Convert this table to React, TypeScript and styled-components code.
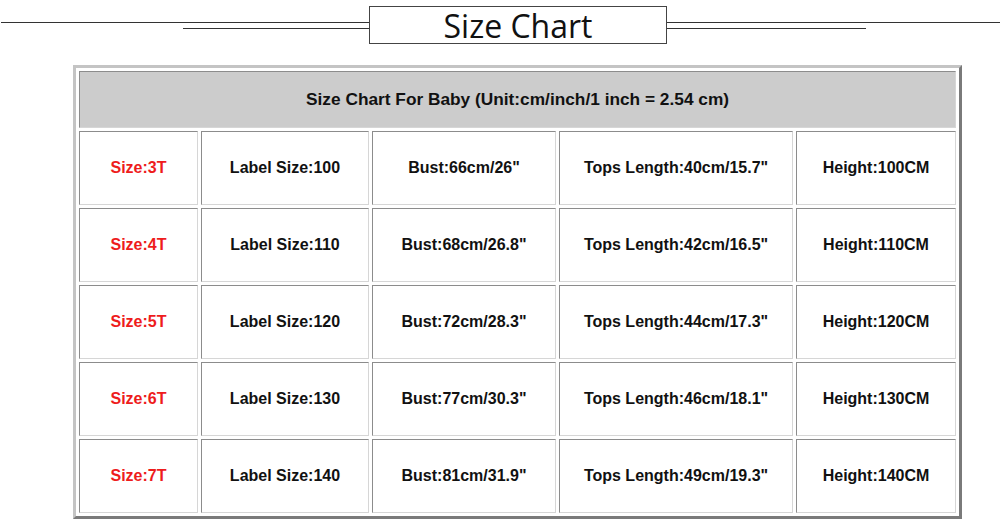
import React from 'react';
import styled, { createGlobalStyle } from 'styled-components';

const GlobalStyle = createGlobalStyle`
  html, body {
    margin: 0;
    padding: 0;
    background: #ffffff;
  }
  body {
    width: 1000px;
    height: 530px;
    overflow: hidden;
    font-family: "Liberation Sans", Arial, sans-serif;
  }
`;

/* page */
const Page = styled.div`
  width: 1000px;
  height: 530px;
  display: flex;
  flex-direction: column;
`;

/* title bar */
const TitleBar = styled.div`
  display: flex;
  align-items: flex-start;
  padding-top: 6px;
  height: 38px;
`;

const Rule = styled.div<{ $side: 'left' | 'right' }>`
  flex: ${({ $side }) => ($side === 'left' ? '0 0 368px' : '1')};
  display: flex;
  flex-direction: column;
  align-items: ${({ $side }) => ($side === 'left' ? 'flex-end' : 'flex-start')};
  padding-top: 16px;
  gap: 5px;
  padding-left: ${({ $side }) => ($side === 'left' ? '1px' : '0')};
`;

const Line = styled.div<{ $short?: number }>`
  height: 1px;
  background: #333;
  width: ${({ $short }) => ($short ? `${$short}px` : '100%')};
`;

const TitleBox = styled.div`
  box-sizing: border-box;
  width: 298px;
  height: 38px;
  border: 1px solid #444;
  display: flex;
  align-items: center;
  justify-content: center;
`;

const TitleText = styled.h1`
  margin: 0;
  font-family: "Open Sans", "Noto Sans", sans-serif;
  font-size: 32px;
  font-weight: 400;
  line-height: 1;
  color: #111;
  padding-top: 1px;
`;

/* chart table */
const Table = styled.table`
  margin: 21px 0 0 73px;
  width: 889px;
  table-layout: fixed;
  border-collapse: separate;
  border-spacing: 3px;
  border: 3px solid;
  border-color: #c4c4c4 #7a7a7a #7a7a7a #c4c4c4;
  background: #ffffff;
`;

const Cell = styled.td<{ $head?: boolean; $red?: boolean }>`
  box-sizing: border-box;
  height: ${({ $head }) => ($head ? '57px' : '74px')};
  padding: 0;
  border: 1px solid;
  border-color: #8c8c8c #d6d6d6 #d6d6d6 #8c8c8c;
  background: ${({ $head }) => ($head ? '#cccccc' : '#ffffff')};
  text-align: center;
  vertical-align: middle;
  font-size: ${({ $head }) => ($head ? '17.3px' : '16px')};
  font-weight: 700;
  color: ${({ $red }) => ($red ? '#ee1c1c' : '#111111')};
  white-space: nowrap;
`;

const colWidths = [119, 168, 184, 234, 160];

const rows = [
  ['3T', '100', '66cm/26"', '40cm/15.7"', '100CM'],
  ['4T', '110', '68cm/26.8"', '42cm/16.5"', '110CM'],
  ['5T', '120', '72cm/28.3"', '44cm/17.3"', '120CM'],
  ['6T', '130', '77cm/30.3"', '46cm/18.1"', '130CM'],
  ['7T', '140', '81cm/31.9"', '49cm/19.3"', '140CM'],
];

export default function App() {
  return (
    <>
      <GlobalStyle />
      <Page>
        <TitleBar>
          <Rule $side="left">
            <Line />
            <Line $short={186} />
          </Rule>
          <TitleBox>
            <TitleText>Size Chart</TitleText>
          </TitleBox>
          <Rule $side="right">
            <Line />
            <Line $short={199} />
          </Rule>
        </TitleBar>

        <Table>
          <colgroup>
            {colWidths.map((w, i) => (
              <col key={i} style={{ width: w }} />
            ))}
          </colgroup>
          <tbody>
            <tr>
              <Cell $head colSpan={5}>
                Size Chart For Baby (Unit:cm/inch/1 inch = 2.54 cm)
              </Cell>
            </tr>
            {rows.map((r) => (
              <tr key={r[0]}>
                <Cell $red>Size:{r[0]}</Cell>
                <Cell>Label Size:{r[1]}</Cell>
                <Cell>Bust:{r[2]}</Cell>
                <Cell>Tops Length:{r[3]}</Cell>
                <Cell>Height:{r[4]}</Cell>
              </tr>
            ))}
          </tbody>
        </Table>
      </Page>
    </>
  );
}
